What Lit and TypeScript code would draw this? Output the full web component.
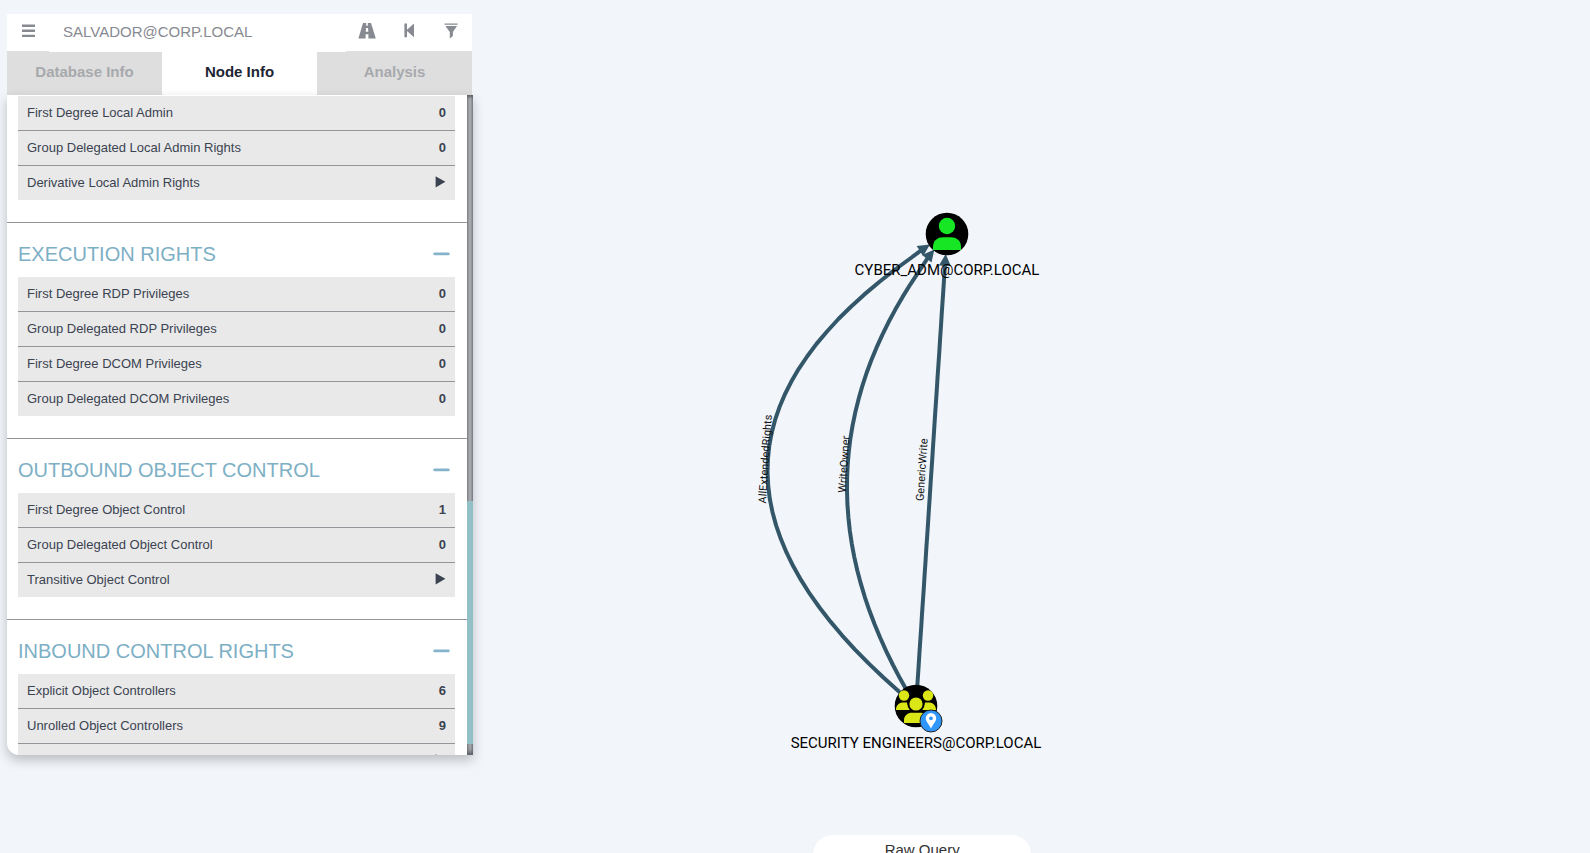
import { LitElement, html, svg, css } from "lit";
import { customElement, property, state } from "lit/decorators.js";
import { classMap } from "lit/directives/class-map.js";

type Row = { label: string; value: string | null };
type Section = { title: string; rows: Row[] };
type Point = { x: number; y: number };

const ADMIN_ROWS: Row[] = [
  { label: "First Degree Local Admin", value: "0" },
  { label: "Group Delegated Local Admin Rights", value: "0" },
  { label: "Derivative Local Admin Rights", value: null },
];

const SECTIONS: Section[] = [
  {
    title: "EXECUTION RIGHTS",
    rows: [
      { label: "First Degree RDP Privileges", value: "0" },
      { label: "Group Delegated RDP Privileges", value: "0" },
      { label: "First Degree DCOM Privileges", value: "0" },
      { label: "Group Delegated DCOM Privileges", value: "0" },
    ],
  },
  {
    title: "OUTBOUND OBJECT CONTROL",
    rows: [
      { label: "First Degree Object Control", value: "1" },
      { label: "Group Delegated Object Control", value: "0" },
      { label: "Transitive Object Control", value: null },
    ],
  },
  {
    title: "INBOUND CONTROL RIGHTS",
    rows: [
      { label: "Explicit Object Controllers", value: "6" },
      { label: "Unrolled Object Controllers", value: "9" },
      { label: "Transitive Object Controllers", value: null },
    ],
  },
];

@customElement("node-table")
class NodeTable extends LitElement {
  @property({ attribute: false }) rows: Row[] = [];

  static styles = css`
    :host {
      display: block;
      padding: 0 12px 22px 11px;
    }
    .table {
      width: 100%;
      border-collapse: separate;
      border-spacing: 0;
      background: #e9e9e9;
      color: #3b4351;
      font-size: 13px;
      line-height: 16px;
    }
    .label,
    .value {
      height: 34px;
      padding: 0 9px;
      border-bottom: 1px solid #93959a;
      text-align: left;
      font-weight: 400;
    }
    .value {
      text-align: right;
      font-weight: 700;
    }
    .row:last-child .label,
    .row:last-child .value {
      border-bottom: 0;
    }
    .play {
      display: inline-block;
      padding: 0 0 3px;
      border: 0;
      background: none;
      color: inherit;
      vertical-align: middle;
    }
    .play-icon {
      display: block;
    }
  `;

  render() {
    return html`<table class="table">
      <tbody>
        ${this.rows.map(
          (r) => html`<tr class="row">
            <th class="label" scope="row">${r.label}</th>
            <td class="value">
              ${r.value ??
              html`<button class="play" aria-label=${r.label}>
                <svg class="play-icon" width="11" height="14" viewBox="0 0 11 14">
                  <path d="M0.6 1.2 L10.4 6.8 L0.6 12.6 Z" fill="currentColor" />
                </svg>
              </button>`}
            </td>
          </tr>`
        )}
      </tbody>
    </table>`;
  }
}

@customElement("search-panel")
class SearchPanel extends LitElement {
  @state() tab = "Node Info";

  static styles = css`
    :host {
      display: flex;
      flex-direction: column;
      min-height: 0;
    }
    .search {
      display: flex;
      height: 37px;
      margin-right: 1px;
      background: #fff;
      color: #878a91;
    }
    .icon-button {
      display: flex;
      flex: none;
      align-items: center;
      justify-content: center;
      width: 42px;
      padding: 0 0 4px;
      border: 0;
      background: none;
      color: inherit;
    }
    .query {
      z-index: 1;
      flex: 1;
      min-width: 0;
      margin-bottom: -1px;
      padding: 0 14px 3px;
      border: 0;
      outline: 0;
      background: #fff;
      color: #878a91;
      font: 15px/20px "Liberation Sans", Arial, sans-serif;
    }
    .tabs {
      display: grid;
      grid-template-columns: repeat(3, 1fr);
      margin-right: 1px;
      background: #fff;
    }
    .tab {
      height: 44px;
      padding: 0 0 3px;
      border: 0;
      background: #dedede;
      color: #a7a9ad;
      font: 700 15px/20px "Liberation Sans", Arial, sans-serif;
    }
    .tab.active {
      background: #fff;
      color: #1d2533;
    }
    .body {
      display: flex;
      flex: 1;
      min-height: 0;
      border-radius: 0 0 0 12px;
      background: #fff;
      box-shadow: 0 5px 12px rgba(0, 0, 0, 0.24);
      overflow: hidden;
    }
    .scroller {
      flex: 1;
      min-width: 0;
      padding-top: 1px;
      overflow-y: auto;
      scrollbar-width: none;
    }
    .track {
      display: flex;
      flex: none;
      flex-direction: column;
      width: 6px;
      background: linear-gradient(90deg, #85888d, #a6a9ae 45%, #a6a9ae 60%, #7d7f86);
    }
    .before {
      flex: 406;
      box-shadow: inset 0 3px 3px -1px #5c5e64;
    }
    .thumb {
      flex: 243;
      background: #91c0c6;
    }
    .after {
      flex: 11;
      box-shadow: inset 0 -4px 4px -1px #5c5e64;
    }
    .heading {
      display: flex;
      align-items: center;
      justify-content: space-between;
      height: 54px;
      padding: 0 17px 0 11px;
      border-top: 1px solid #93959a;
    }
    .title {
      margin: 0;
      padding-top: 7px;
      color: #7dafc5;
      font-size: 20px;
      line-height: 24px;
      font-weight: 400;
    }
    .toggle {
      padding: 7px 0 0;
      border: 0;
      background: none;
      color: #84b4c9;
    }
    .glyph {
      display: block;
    }
  `;

  render() {
    return html`
      <div class="search">
        <button class="icon-button" aria-label="More info">
          <svg class="glyph" width="14" height="14" viewBox="0 0 14 14" fill="currentColor">
            <path d="M1 0.5h13v2.4h-13zM1 5.6h13v2.4h-13zM1 10.7h13v2.4h-13z" />
          </svg>
        </button>
        <input class="query" aria-label="Search for a node" .value=${"SALVADOR@CORP.LOCAL"} />
        <button class="icon-button" aria-label="Pathfinding">
          <svg class="glyph" width="18" height="16" viewBox="0 0 18 16" fill="currentColor">
            <path
              d="M5 0H8.2V2.8H9.8V0H13L17.8 15.6H10.4V11.3H7.6V15.6H0.4ZM8 5L7.7 8.8H10.3L10 5Z"
              fill-rule="evenodd"
            />
          </svg>
        </button>
        <button class="icon-button" aria-label="Back">
          <svg class="glyph" width="11" height="15" viewBox="0 0 11 15" fill="currentColor">
            <path d="M0.4 0.5H3V6.8L10 0.5V14.3L3 8V14.3H0.4Z" />
          </svg>
        </button>
        <button class="icon-button" aria-label="Filter">
          <svg class="glyph" width="14" height="16" viewBox="0 0 14 16" fill="currentColor">
            <path d="M0.6 0.4H13.6V1.7H0.6ZM1.4 3H13L8.9 9V13L5.800 15.600V9Z" />
          </svg>
        </button>
      </div>
      <div class="tabs" role="tablist">
        ${["Database Info", "Node Info", "Analysis"].map(
          (t) => html`<button
            role="tab"
            aria-selected=${t === this.tab ? "true" : "false"}
            class=${classMap({ tab: true, active: t === this.tab })}
            @click=${() => (this.tab = t)}
          >${t}</button>`
        )}
      </div>
      <div class="body">
        <div class="scroller">
          <node-table .rows=${ADMIN_ROWS}></node-table>
          ${SECTIONS.map(
            (s) => html`<section>
              <div class="heading">
                <h4 class="title">${s.title}</h4>
                <button class="toggle" aria-label="Collapse ${s.title}">
                  <svg class="glyph" width="17" height="4" viewBox="0 0 17 4">
                    <rect x="0.4" y="0.4" width="16.2" height="2.8" rx="1" fill="currentColor" />
                  </svg>
                </button>
              </div>
              <node-table .rows=${s.rows}></node-table>
            </section>`
          )}
        </div>
        <div class="track">
          <div class="before"></div>
          <div class="thumb"></div>
          <div class="after"></div>
        </div>
      </div>
    `;
  }
}

const GROUP: Point = { x: 436, y: 706 };
const USER: Point = { x: 467, y: 234 };
const NODE_RADIUS = 21;
const ARROW = 12;

const EDGES = [
  { label: "AllExtendedRights", bend: 328, gap: -1 },
  { label: "WriteOwner", bend: 168, gap: 0 },
  { label: "GenericWrite", bend: 0, gap: 6 },
];

/* Samples a quadratic edge into short segments, and ends it with an arrow head at the rim of the target. */
function edgeShape(from: Point, to: Point, bend: number) {
  const dx = to.x - from.x;
  const dy = to.y - from.y;
  const len = Math.hypot(dx, dy);
  const nx = dy / len;
  const ny = -dx / len;
  const mid = { x: (from.x + to.x) / 2, y: (from.y + to.y) / 2 };
  const ctrl = { x: mid.x + nx * bend, y: mid.y + ny * bend };
  const back = Math.hypot(ctrl.x - to.x, ctrl.y - to.y);
  const ux = (ctrl.x - to.x) / back;
  const uy = (ctrl.y - to.y) / back;
  const at = (d: number, side: number) =>
    `${(to.x + ux * d - uy * side).toFixed(1)},${(to.y + uy * d + ux * side).toFixed(1)}`;
  const points: string[] = [];
  for (let i = 0; i <= 36; i++) {
    const t = i / 36;
    const x = (1 - t) ** 2 * from.x + 2 * t * (1 - t) * ctrl.x + t * t * to.x;
    const y = (1 - t) ** 2 * from.y + 2 * t * (1 - t) * ctrl.y + t * t * to.y;
    if (Math.hypot(x - to.x, y - to.y) > NODE_RADIUS + ARROW) {
      points.push(`${x.toFixed(1)},${y.toFixed(1)}`);
    }
  }
  points.push(at(NODE_RADIUS + ARROW - 4, 0));
  const tip = NODE_RADIUS - 1;
  const base = NODE_RADIUS + ARROW - 1;
  return {
    line: points.join(" "),
    head: `${at(tip, 0)} ${at(base, 6)} ${at(base, -6)}`,
    angle: (Math.atan2(dy, dx) * 180) / Math.PI,
    middle: { x: mid.x + (nx * bend) / 2, y: mid.y + (ny * bend) / 2 },
  };
}

@customElement("graph-view")
class GraphView extends LitElement {
  static styles = css`
    :host {
      display: block;
      min-width: 0;
      min-height: 0;
    }
    .canvas {
      display: block;
      width: 100%;
      height: 100%;
    }
    .line {
      fill: none;
      stroke: #335769;
      stroke-width: 4px;
      stroke-linejoin: round;
    }
    .head {
      fill: #335769;
    }
    .edge-label {
      font: 11px Roboto, sans-serif;
      fill: #111;
      text-anchor: middle;
    }
    .node-label {
      font: 15px Roboto, sans-serif;
      fill: #000;
      text-anchor: middle;
    }
    .user {
      fill: #17e625;
    }
    .group {
      fill: #dbe617;
    }
    .front {
      stroke: #000;
      stroke-width: 2px;
    }
    .pin-disc {
      fill: #3097fa;
      stroke: #222;
      stroke-width: 1px;
    }
    .pin {
      fill: #fff;
    }
    .pin-dot {
      fill: #3097fa;
    }
  `;

  render() {
    return html`<svg class="canvas" viewBox="0 0 1110 853" role="img" aria-label="Attack path graph">
      ${EDGES.map((e) => {
        const s = edgeShape(GROUP, USER, e.bend);
        return svg`<polyline class="line" points=${s.line} />
          <polygon class="head" points=${s.head} />
          <text class="edge-label" transform="translate(${s.middle.x - e.gap} ${s.middle.y}) rotate(${s.angle})">${e.label}</text>`;
      })}
      <g transform="translate(${USER.x} ${USER.y})">
        <circle r="21.3" />
        <circle class="user" cx="0" cy="-8" r="8.2" />
        <path class="user" d="M-14 16V13C-14 6.500-9.500 3.200-4 3.200H4C9.500 3.200 14 6.500 14 13V16Z" />
      </g>
      <text class="node-label" x=${USER.x} y="275">CYBER_ADM@CORP.LOCAL</text>
      <g transform="translate(${GROUP.x} ${GROUP.y})">
        <circle r="21.3" />
        <circle class="group" cx="-12" cy="-10.500" r="5.200" />
        <circle class="group" cx="12" cy="-10.500" r="5.200" />
        <path class="group" d="M-20 4C-20-1-17-3.500-12.500-3.500H-9Q-8 0-6 4Z" />
        <path class="group" d="M20 4C20-1 17-3.500 12.500-3.500H9Q8 0 6 4Z" />
        <circle class="group front" cx="0" cy="-2" r="7.600" />
        <path class="group" d="M-12 17V14C-12 9.500-8 6.800-4 6.800H4C8 6.800 12 9.500 12 14V17Z" />
        <circle class="pin-disc" cx="15" cy="15" r="11" />
        <path class="pin" d="M15 22.500C12.500 17.500 9.800 15.500 9.800 12.300A5.200 5.200 0 0 1 20.200 12.300C20.200 15.500 17.500 17.500 15 22.500Z" />
        <circle class="pin-dot" cx="15" cy="12.300" r="1.900" />
      </g>
      <text class="node-label" x=${GROUP.x} y="748">SECURITY ENGINEERS@CORP.LOCAL</text>
    </svg>`;
  }
}

@customElement("app-root")
class AppRoot extends LitElement {
  static styles = css`
    :host {
      display: grid;
      position: relative;
      grid-template-columns: 480px 1fr;
      height: 100vh;
      overflow: hidden;
      background: #f2f6fb;
      font-family: "Liberation Sans", Arial, sans-serif;
    }
    .side {
      margin: 14px 7px 98px;
    }
    .raw-query {
      position: absolute;
      bottom: -18px;
      left: 58%;
      width: 218px;
      height: 36px;
      padding: 0 0 6px;
      transform: translateX(-50%);
      border: 0;
      border-radius: 20px 20px 0 0;
      background: #fff;
      color: #333;
      font: 15px/20px "Liberation Sans", Arial, sans-serif;
    }
  `;

  render() {
    return html`
      <search-panel class="side"></search-panel>
      <graph-view></graph-view>
      <button class="raw-query">Raw Query</button>
    `;
  }
}
